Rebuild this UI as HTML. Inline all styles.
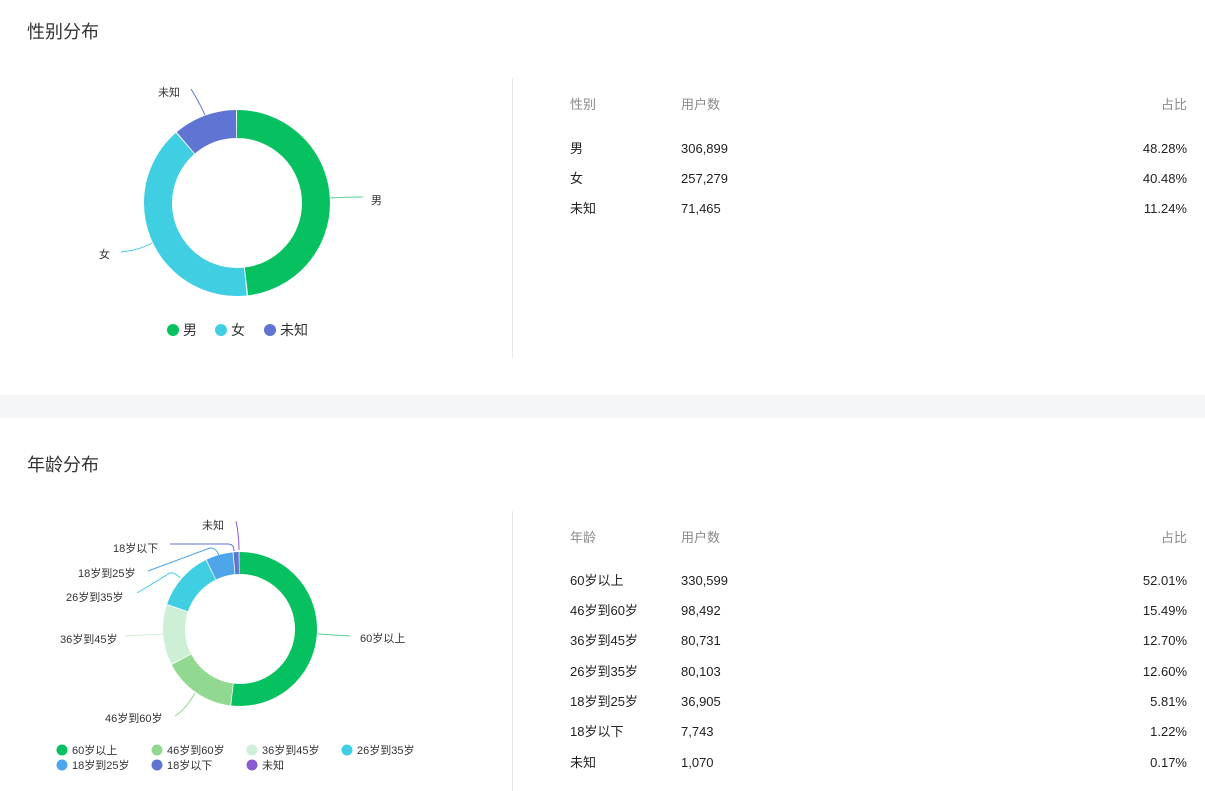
<!DOCTYPE html>
<html><head><meta charset="utf-8"><style>
*{margin:0;padding:0;box-sizing:border-box}
body{width:1205px;height:791px;background:#fff;position:relative;overflow:hidden;font-family:"Liberation Sans","Noto Sans CJK SC",sans-serif;color:#222}
.a{position:absolute;white-space:nowrap;line-height:18px}
.t{font-size:18px;color:#333;left:27px;line-height:24px}
.h{font-size:13px;color:#8a8a8a}
.c{font-size:13px;color:#222}
.r{right:18px;text-align:right}
.band{position:absolute;left:0;top:395px;width:1205px;height:23px;background:#f5f6f7}
.vl{position:absolute;left:512px;width:1px;background:#e8e8e8}
svg{position:absolute;left:0;top:0}
</style></head><body>
<div class="a t" style="top:20px">性别分布</div>
<div class="band"></div>
<div class="a t" style="top:453px">年龄分布</div>
<div class="vl" style="top:78px;height:280px"></div>
<div class="vl" style="top:511px;height:280px"></div>

<svg width="1205" height="791" viewBox="0 0 1205 791" font-family="Liberation Sans,Noto Sans CJK SC,sans-serif">
<g transform="rotate(-90 237 203)" fill="none" stroke-width="28">
<circle cx="237" cy="203" r="79" stroke="#07c160" stroke-dasharray="238.6 600" stroke-dashoffset="0"/>
<circle cx="237" cy="203" r="79" stroke="#40cee3" stroke-dasharray="199.9 600" stroke-dashoffset="-239.65"/>
<circle cx="237" cy="203" r="79" stroke="#6075d3" stroke-dasharray="54.8 600" stroke-dashoffset="-440.5"/>
</g>
<g fill="none" stroke-width="1">
<path d="M330 198 Q345 197 363 197" stroke="#07c160" opacity=".7"/>
<path d="M152 243 Q140 250 121 252" stroke="#40cee3"/>
<path d="M205 115 Q198 100 191 89" stroke="#6075d3"/>
</g>
<g font-size="11" fill="#333">
<text x="371" y="204">男</text>
<text x="99" y="258">女</text>
<text x="158" y="96">未知</text>
</g>
<circle cx="173" cy="330" r="6" fill="#07c160"/><text x="183" y="335" font-size="14" fill="#333">男</text>
<circle cx="221" cy="330" r="6" fill="#40cee3"/><text x="231" y="335" font-size="14" fill="#333">女</text>
<circle cx="270" cy="330" r="6" fill="#6075d3"/><text x="280" y="335" font-size="14" fill="#333">未知</text>

<g transform="rotate(-90 240 629)" fill="none" stroke-width="22">
<circle cx="240" cy="629" r="66" stroke="#07c160" stroke-dasharray="214.9 600" stroke-dashoffset="0"/>
<circle cx="240" cy="629" r="66" stroke="#91d890" stroke-dasharray="63.4 600" stroke-dashoffset="-215.68"/>
<circle cx="240" cy="629" r="66" stroke="#cdefd6" stroke-dasharray="51.9 600" stroke-dashoffset="-279.92"/>
<circle cx="240" cy="629" r="66" stroke="#40cee3" stroke-dasharray="51.5 600" stroke-dashoffset="-332.59"/>
<circle cx="240" cy="629" r="66" stroke="#4ea5ea" stroke-dasharray="23.3 600" stroke-dashoffset="-384.84"/>
<circle cx="240" cy="629" r="66" stroke="#5f73d1" stroke-dasharray="4.4 600" stroke-dashoffset="-408.93"/>
<circle cx="240" cy="629" r="66" stroke="#8c5bd0" stroke-dasharray="0.7 600" stroke-dashoffset="-413.99"/>
</g>
<g fill="none" stroke-width="1">
<path d="M318 634 Q335 635 350 636" stroke="#07c160" opacity=".7"/>
<path d="M195 693 Q185 710 175 716" stroke="#91d890"/>
<path d="M163 634 Q145 635 125 636" stroke="#cdefd6"/>
<path d="M180 578 Q175 572 170 573 L137 593" stroke="#40cee3"/>
<path d="M219 555 Q216 548 210 548 L148 571" stroke="#4ea5ea"/>
<path d="M234 551 Q234 544 228 544 L170 544" stroke="#5f73d1"/>
<path d="M239 550 Q239 535 236 521" stroke="#8c5bd0"/>
</g>
<g font-size="11" fill="#333">
<text x="360" y="642">60岁以上</text>
<text x="105" y="722">46岁到60岁</text>
<text x="60" y="643">36岁到45岁</text>
<text x="66" y="601">26岁到35岁</text>
<text x="78" y="577">18岁到25岁</text>
<text x="113" y="552">18岁以下</text>
<text x="202" y="529">未知</text>
</g>
<g font-size="11" fill="#333">
<circle cx="62" cy="750" r="5.5" fill="#07c160"/><text x="72" y="754">60岁以上</text>
<circle cx="157" cy="750" r="5.5" fill="#91d890"/><text x="167" y="754">46岁到60岁</text>
<circle cx="252" cy="750" r="5.5" fill="#cdefd6"/><text x="262" y="754">36岁到45岁</text>
<circle cx="347" cy="750" r="5.5" fill="#40cee3"/><text x="357" y="754">26岁到35岁</text>
<circle cx="62" cy="765" r="5.5" fill="#4ea5ea"/><text x="72" y="769">18岁到25岁</text>
<circle cx="157" cy="765" r="5.5" fill="#5f73d1"/><text x="167" y="769">18岁以下</text>
<circle cx="252" cy="765" r="5.5" fill="#8c5bd0"/><text x="262" y="769">未知</text>
</g>
</svg>

<div class="a h" style="left:570px;top:96px">性别</div>
<div class="a h" style="left:681px;top:96px">用户数</div>
<div class="a h r" style="top:96px">占比</div>
<div class="a c" style="left:570px;top:140px">男</div><div class="a c" style="left:681px;top:140px">306,899</div><div class="a c r" style="top:140px">48.28%</div>
<div class="a c" style="left:570px;top:170px">女</div><div class="a c" style="left:681px;top:170px">257,279</div><div class="a c r" style="top:170px">40.48%</div>
<div class="a c" style="left:570px;top:200px">未知</div><div class="a c" style="left:681px;top:200px">71,465</div><div class="a c r" style="top:200px">11.24%</div>

<div class="a h" style="left:570px;top:529px">年龄</div>
<div class="a h" style="left:681px;top:529px">用户数</div>
<div class="a h r" style="top:529px">占比</div>
<div class="a c" style="left:570px;top:572px">60岁以上</div><div class="a c" style="left:681px;top:572px">330,599</div><div class="a c r" style="top:572px">52.01%</div>
<div class="a c" style="left:570px;top:602px">46岁到60岁</div><div class="a c" style="left:681px;top:602px">98,492</div><div class="a c r" style="top:602px">15.49%</div>
<div class="a c" style="left:570px;top:632px">36岁到45岁</div><div class="a c" style="left:681px;top:632px">80,731</div><div class="a c r" style="top:632px">12.70%</div>
<div class="a c" style="left:570px;top:663px">26岁到35岁</div><div class="a c" style="left:681px;top:663px">80,103</div><div class="a c r" style="top:663px">12.60%</div>
<div class="a c" style="left:570px;top:693px">18岁到25岁</div><div class="a c" style="left:681px;top:693px">36,905</div><div class="a c r" style="top:693px">5.81%</div>
<div class="a c" style="left:570px;top:723px">18岁以下</div><div class="a c" style="left:681px;top:723px">7,743</div><div class="a c r" style="top:723px">1.22%</div>
<div class="a c" style="left:570px;top:754px">未知</div><div class="a c" style="left:681px;top:754px">1,070</div><div class="a c r" style="top:754px">0.17%</div>
</body></html>
